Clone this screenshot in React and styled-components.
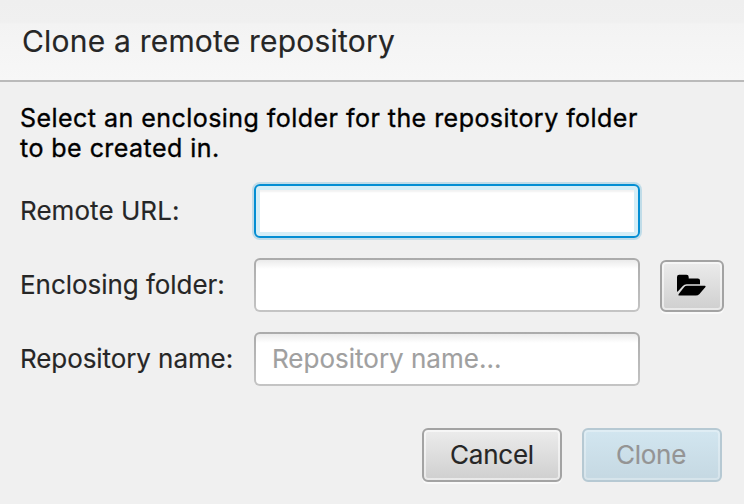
import React from "react";
import styled, { createGlobalStyle, css } from "styled-components";

const GlobalStyle = createGlobalStyle`
  * { box-sizing: border-box; }
  body { margin: 0; background: #f0f0f0; }
`;

const Dialog = styled.div`
  width: 744px;
  height: 504px;
  display: flex;
  flex-direction: column;
  overflow: hidden;
  background: #f0f0f0;
  font-family: Inter, "Liberation Sans", sans-serif;
  font-size: 26px;
  color: #262626;
  -webkit-text-stroke: 0.15px currentColor;
`;

const Header = styled.header`
  flex: none;
  height: 82px;
  padding: 23px 22px 0;
  border-bottom: 2px solid #bababa;
  background: linear-gradient(#efefef 0, #f0f0f0 22px, #f3f3f3 24px, #f7f7f7 80px);
`;

const Title = styled.h1`
  margin: 0;
  font-size: 30px;
  line-height: 36px;
  font-weight: 400;
  letter-spacing: 0.2px;
  white-space: nowrap;
`;

const Body = styled.main`
  flex: none;
  height: 346px;
  padding: 21px 20px 0;
`;

const Description = styled.p`
  margin: 0 0 21px;
  width: 650px;
  font-size: 25px;
  line-height: 30px;
  font-weight: 400;
  letter-spacing: 0.46px;
  -webkit-text-stroke: 0.35px #000;
  color: #000;
`;

const Form = styled.form`
  display: grid;
  grid-template-columns: 234px 386px 84px;
  grid-auto-rows: 54px;
  row-gap: 20px;
`;

const Label = styled.label`
  grid-column: 1;
  line-height: 54px;
  white-space: nowrap;
  letter-spacing: ${(p) => p.$tracking || 0}px;
`;

const Field = styled.input`
  grid-column: 2;
  width: 386px;
  height: 54px;
  padding: 0 16px 2px;
  border: 2px solid transparent;
  border-radius: 6px;
  outline: none;
  background:
    linear-gradient(#ebebeb, #fff 9px) padding-box,
    linear-gradient(#ababab, #c4c4c4) border-box;
  font: inherit;
  color: #262626;
  &::placeholder { color: #a0a0a0; opacity: 1; }
  ${(p) => p.$focused && css`
    border-color: #038ed3;
    background: #fff;
    box-shadow: 0 0 0 2px #c0dce8, inset 0 0 0 4px #d5eef7, inset 0 7px 2px -1px #f2f2f2;
  `}
`;

const Button = styled.button`
  display: flex;
  align-items: center;
  justify-content: center;
  width: 140px;
  height: 54px;
  padding: 0 0 1px;
  border: 2px solid #a3a3a3;
  border-radius: 6px;
  background: linear-gradient(#ececec, #cfcfcf);
  box-shadow: inset 0 0 0 2px rgba(255, 255, 255, 0.55), 0 2px 0 #f9f9f9;
  font: inherit;
  letter-spacing: -0.25px;
  color: #262626;
  &:disabled {
    padding-right: 2px;
    border-color: #b6c9d3;
    background: linear-gradient(#d2e6f0, #c5d8e2);
    box-shadow: inset 0 0 0 2px rgba(255, 255, 255, 0.3);
    color: #949494;
  }
`;

const BrowseButton = styled(Button)`
  grid-column: 3;
  width: 64px;
  height: 52px;
  margin: 2px 0 0 20px;
  padding: 0 2px 2px 0;
  color: #000;
`;

const FolderIcon = styled.svg`
  width: 29px;
  height: 22px;
`;

const Footer = styled.footer`
  display: flex;
  justify-content: flex-end;
  gap: 20px;
  padding-right: 22px;
`;

export default function App() {
  return (
    <>
      <GlobalStyle />
      <Dialog>
        <Header>
          <Title>Clone a remote repository</Title>
        </Header>
        <Body>
          <Description>
            Select an enclosing folder for the repository folder
            <br />
            to be created in.
          </Description>
          <Form>
            <Label htmlFor="url" $tracking={0.05}>Remote URL:</Label>
            <Field id="url" $focused />
            <Label htmlFor="folder" $tracking={-0.04}>Enclosing folder:</Label>
            <Field id="folder" />
            <BrowseButton type="button" aria-label="Browse">
              <FolderIcon viewBox="0 0 29 22" fill="currentColor">
                <path d="M0 17.2V3Q0 .8 2.2.8H9.5Q11.7.8 11.7 3V4.4H20.8Q23 4.4 23 6.6V10.2H9.6Q7.3 10.2 5.8 11.9L1 17.3Q0 18.3 0 17.2Z" />
                <path d="M9.8 11.7H27.8Q29.2 11.9 28.2 13.2L22.5 19.9Q21 21.6 18.8 21.6H2.2Q.9 21.4 1.8 20.1L7.2 13.1Q8.4 11.7 9.8 11.7Z" />
              </FolderIcon>
            </BrowseButton>
            <Label htmlFor="name" $tracking={-0.08}>Repository name:</Label>
            <Field id="name" placeholder="Repository name..." />
          </Form>
        </Body>
        <Footer>
          <Button type="button">Cancel</Button>
          <Button type="button" disabled>Clone</Button>
        </Footer>
      </Dialog>
    </>
  );
}
